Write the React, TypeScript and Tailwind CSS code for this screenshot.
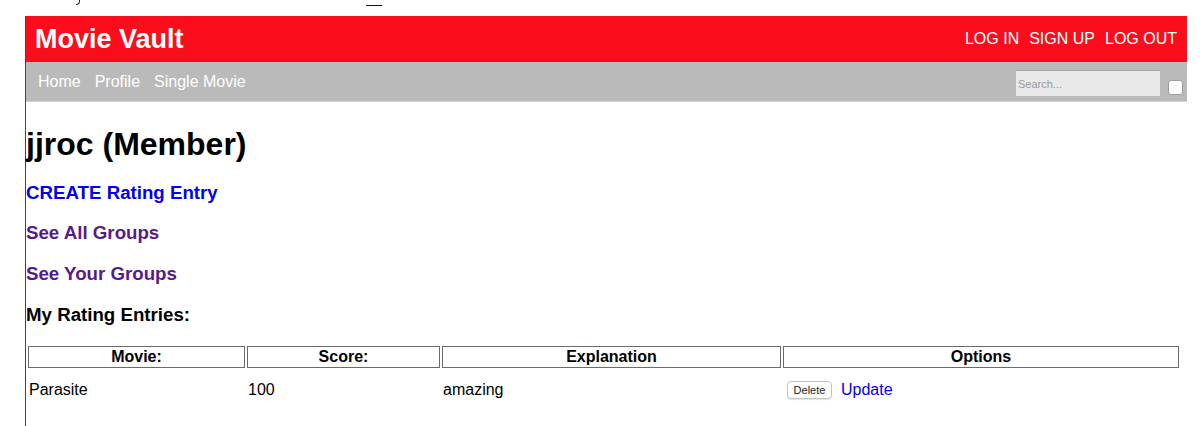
import React from "react";

type Entry = { movie: string; score: number; explanation: string };

const entries: Entry[] = [{ movie: "Parasite", score: 100, explanation: "amazing" }];

const font = { fontFamily: '"Liberation Sans", Arial, Helvetica, sans-serif' };

function TopBar() {
  return (
    <header className="flex h-[46px] items-center justify-between bg-[#fb0d1c] pl-[9px] pr-[10px] text-white">
      <div className="text-[27px] font-bold leading-none">Movie Vault</div>
      <nav className="flex gap-[10px] text-[16px] leading-none">
        <a>LOG IN</a>
        <a>SIGN UP</a>
        <a>LOG OUT</a>
      </nav>
    </header>
  );
}

function NavBar() {
  return (
    <div className="flex h-[40px] items-start justify-between border-b border-[#d2d2d2] bg-[#bababa] pl-[12px] pr-[4px]">
      <div className="mt-[10px] flex gap-[14px] text-[16px] leading-[19px] text-white">
        <a>Home</a>
        <a>Profile</a>
        <a>Single Movie</a>
      </div>
      <div className="flex items-start gap-[8px]">
        <input
          placeholder="Search..."
          className="mt-[8px] h-[26px] w-[144px] border-t border-[#a9a9a9] bg-[#e9e9e9] px-[2px] text-[11px] text-[#333] outline-none placeholder:text-[#9a9a9a]"
        />
        <span className="mt-[18px] h-[15px] w-[15px] rounded-[3px] border border-[#9c9c9c] bg-white" />
      </div>
    </div>
  );
}

function RatingTable({ rows }: { rows: Entry[] }) {
  return (
    <table className="w-[1155px] table-fixed border-separate border-spacing-[2px] text-[16px]">
      <thead>
        <tr>
          <th className="w-[217px] border border-[#6b6b6b] leading-[20px] font-bold">Movie:</th>
          <th className="w-[193px] border border-[#6b6b6b] leading-[20px] font-bold">Score:</th>
          <th className="w-[339px] border border-[#6b6b6b] leading-[20px] font-bold">Explanation</th>
          <th className="border border-[#6b6b6b] leading-[20px] font-bold">Options</th>
        </tr>
      </thead>
      <tbody>
        {rows.map((r, i) => (
          <tr key={`${r.movie}-${i}`} className="h-[40px]">
            <td className="px-[1px] align-middle">{r.movie}</td>
            <td className="px-[1px] align-middle">{r.score}</td>
            <td className="px-[1px] align-middle">{r.explanation}</td>
            <td className="px-[1px] align-middle">
              <div className="flex items-center gap-[9px] pl-[3px]">
                <button className="h-[18px] w-[45px] rounded-[4px] border border-[#c4c4c4] bg-white text-[11px] leading-none text-[#222] shadow-[0_1px_1px_rgba(0,0,0,0.12)]">
                  Delete
                </button>
                <a className="text-[16px] text-[#0000ee]">Update</a>
              </div>
            </td>
          </tr>
        ))}
      </tbody>
    </table>
  );
}

export default function App() {
  return (
    <div className="min-h-[426px] w-[1200px] bg-white text-black" style={font}>
      {/* cut-off line from above the frame */}
      <div className="flex h-[16px] items-start">
        <span className="ml-[76px] mt-[-4px] h-[9px] w-[4px] rounded-br-full border-r-[1.5px] border-b border-[#222]" />
        <span className="ml-[286px] mt-[5px] h-[1px] w-[16px] bg-[#111]" />
      </div>
      <div className="ml-[25px] min-h-[410px] w-[1162px] border-l border-[#444]">
        <TopBar />
        <NavBar />
        <main>
          <h1 className="mt-[24px] text-[32px] font-bold leading-[37px]">jjroc (Member)</h1>
          <a className="mt-[19px] block text-[18.7px] font-bold leading-[22px] text-[#0000ee]">CREATE Rating Entry</a>
          <a className="mt-[18px] block text-[18.7px] font-bold leading-[22px] text-[#551a8b]">See All Groups</a>
          <a className="mt-[19px] block text-[18.7px] font-bold leading-[22px] text-[#551a8b]">See Your Groups</a>
          <h3 className="mt-[19px] text-[18.7px] font-bold leading-[22px]">My Rating Entries:</h3>
          <div className="mt-[18px]">
            <RatingTable rows={entries} />
          </div>
        </main>
      </div>
    </div>
  );
}
